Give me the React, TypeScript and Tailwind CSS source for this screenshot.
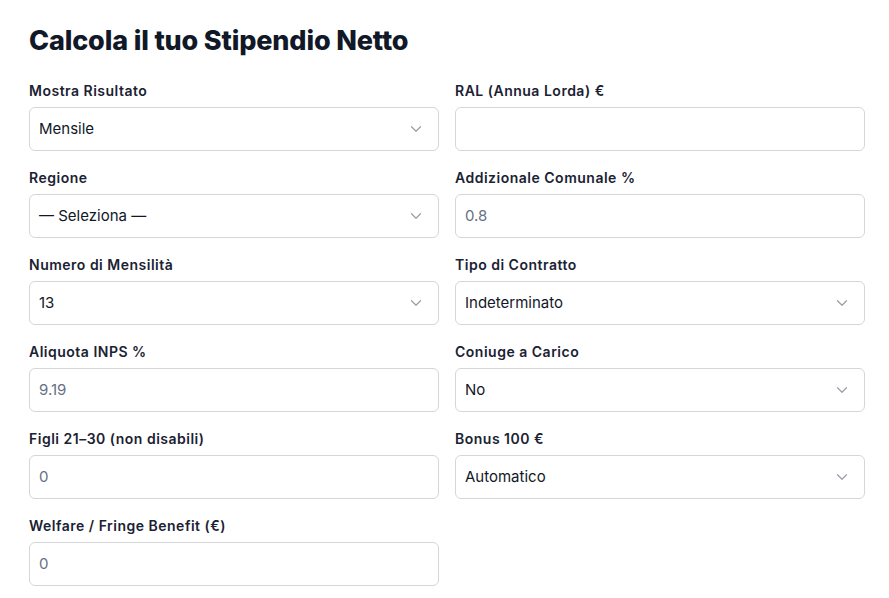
import { ChevronDown } from "lucide-react";

type Field =
  | { kind: "select"; label: string; value: string }
  | { kind: "input"; label: string; value: string };

const fields: Field[] = [
  { kind: "select", label: "Mostra Risultato", value: "Mensile" },
  { kind: "input", label: "RAL (Annua Lorda) €", value: "" },
  { kind: "select", label: "Regione", value: "— Seleziona —" },
  { kind: "input", label: "Addizionale Comunale %", value: "0.8" },
  { kind: "select", label: "Numero di Mensilità", value: "13" },
  { kind: "select", label: "Tipo di Contratto", value: "Indeterminato" },
  { kind: "input", label: "Aliquota INPS %", value: "9.19" },
  { kind: "select", label: "Coniuge a Carico", value: "No" },
  { kind: "input", label: "Figli 21–30 (non disabili)", value: "0" },
  { kind: "select", label: "Bonus 100 €", value: "Automatico" },
  { kind: "input", label: "Welfare / Fringe Benefit (€)", value: "0" },
];

function FormField({ field }: { field: Field }) {
  return (
    <div className="flex flex-col">
      <label className="text-[14px] leading-5 font-semibold text-[#1a2233] tracking-[0.5px]">
        {field.label}
      </label>
      <div className="mt-[6px] h-[44px] flex items-center justify-between rounded-[6px] border border-[#d4d6da] bg-white pl-[9px] pr-[13px]">
        {field.kind === "select" ? (
          <>
            <span className="text-[15px] text-[#111827]">{field.value}</span>
            <ChevronDown className="w-[18px] h-[18px] text-[#9aa0a8]" strokeWidth={1.6} />
          </>
        ) : (
          <span className="text-[15px] text-[#667085]">{field.value}</span>
        )}
      </div>
    </div>
  );
}

export default function App() {
  return (
    <div
      className="min-h-screen bg-white pl-[29px] pr-[24px] pt-[24px]"
      style={{ fontFamily: "Inter, 'Noto Sans', sans-serif" }}
    >
      <h1 className="text-[27px] leading-[34px] font-extrabold text-[#111827] tracking-[-0.15px]">
        Calcola il tuo Stipendio Netto
      </h1>
      <div className="mt-[23px] grid grid-cols-2 gap-x-[16px] gap-y-[17px]">
        {fields.map((f) => (
          <FormField key={f.label} field={f} />
        ))}
      </div>
    </div>
  );
}
